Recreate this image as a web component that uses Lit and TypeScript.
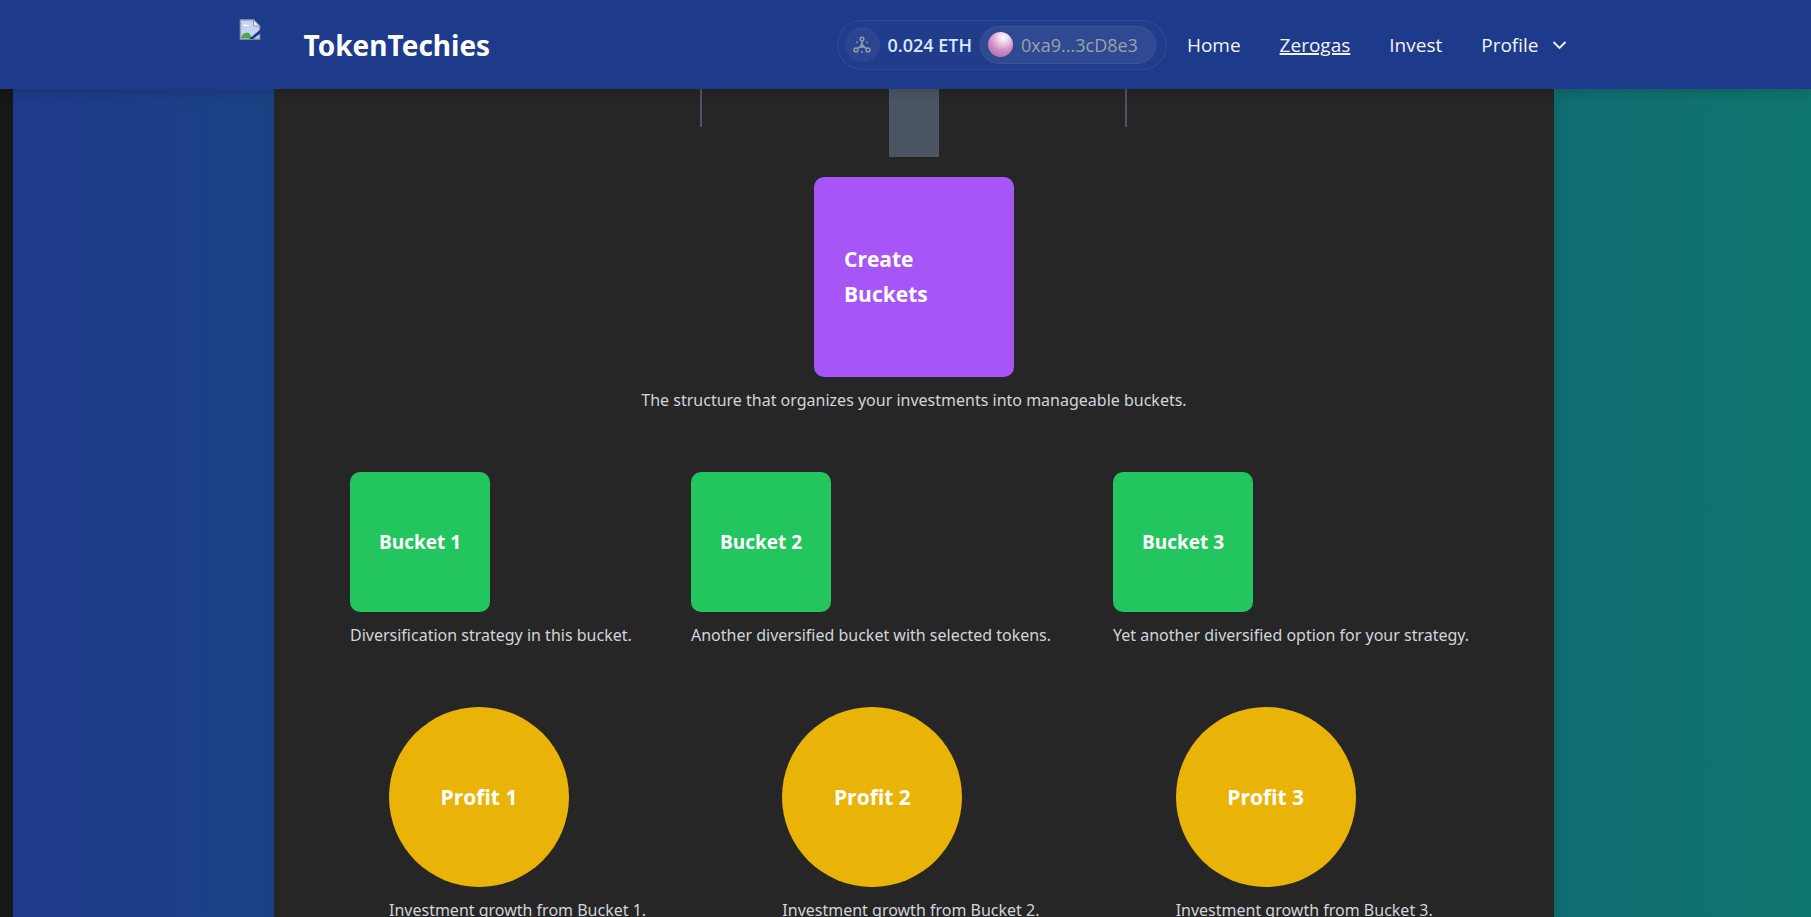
import { LitElement, html, css } from "lit";
import { customElement } from "lit/decorators.js";

const buckets = [
  { name: "Bucket 1", note: "Diversification strategy in this bucket." },
  { name: "Bucket 2", note: "Another diversified bucket with selected tokens." },
  { name: "Bucket 3", note: "Yet another diversified option for your strategy." },
];

const profits = [
  { name: "Profit 1", note: "Investment growth from Bucket 1." },
  { name: "Profit 2", note: "Investment growth from Bucket 2." },
  { name: "Profit 3", note: "Investment growth from Bucket 3." },
];

@customElement("site-header")
class SiteHeader extends LitElement {
  static styles = css`
    :host {
      display: block;
      position: relative;
      z-index: 1;
      background: #1e3a8a;
      box-shadow: 0 4px 12px rgba(0, 0, 0, 0.15);
      color: #f3f4f6;
    }
    .bar {
      box-sizing: border-box;
      max-width: 1334px;
      height: 89px;
      margin: 0 auto;
      padding-right: 6px;
      display: flex;
      align-items: center;
      justify-content: space-between;
    }
    .brand {
      display: flex;
      align-items: center;
      color: #fff;
      text-decoration: none;
      font-family: "Noto Sans", sans-serif;
      font-size: 28px;
      font-weight: 700;
    }
    .logo {
      width: 65px;
      height: 52px;
    }
    .logo svg {
      display: block;
    }
    .right {
      display: flex;
      align-items: center;
      gap: 20px;
    }
    .wallet {
      display: flex;
      align-items: center;
      gap: 8px;
      box-sizing: border-box;
      height: 50px;
      padding: 0 10px 0 7px;
      border: 1px solid rgba(255, 255, 255, 0.07);
      border-radius: 25px;
      background: rgba(255, 255, 255, 0.01);
      font-size: 18px;
    }
    .network {
      display: grid;
      place-items: center;
      width: 35px;
      height: 35px;
      padding: 0;
      border: 0;
      border-radius: 50%;
      background: rgba(255, 255, 255, 0.05);
    }
    .balance {
      color: #dbeafe;
      font-weight: 600;
    }
    .account {
      display: flex;
      align-items: center;
      gap: 8px;
      box-sizing: border-box;
      height: 38px;
      padding: 0 17px 0 7px;
      border: 1px solid rgba(255, 255, 255, 0.05);
      border-radius: 19px;
      background: rgba(255, 255, 255, 0.07);
      color: #99a3a8;
      font: inherit;
      font-weight: 500;
    }
    .ball {
      width: 25px;
      height: 25px;
      border-radius: 50%;
      background: radial-gradient(circle at 62% 22%, #fff 0, #f0d3ea 22%, #cf8fc4 52%, #b979b4 75%, #d5a6d3 100%);
    }
    nav {
      display: flex;
      align-items: center;
      gap: 39px;
      font-size: 19px;
      font-weight: 500;
    }
    nav a,
    .profile {
      color: inherit;
      text-decoration: none;
    }
    nav a.active {
      text-decoration: underline;
      text-decoration-thickness: 2px;
    }
    .profile {
      display: flex;
      align-items: center;
      gap: 13px;
      padding: 0;
      border: 0;
      background: none;
      font: inherit;
    }
  `;

  render() {
    return html`
      <div class="bar">
        <a class="brand" href="#">
          <span class="logo">
            <svg width="22" height="22" viewBox="0 0 22 22">
              <path d="M1.500 1h13l6 6v13h-19z" fill="#c3d5f4" stroke="#9aa3ad" stroke-width="1.500" />
              <path d="M4 7q1-3 3-1q3-1 3 1z" fill="#fff" />
              <path d="M2 19c1-5 5-6 8-5l3 5z" fill="#4fa83d" />
              <path d="M14.500 1v6h6z" fill="#eef2f7" stroke="#8c949c" />
              <path d="M22 10L10 20h4l8-6z" fill="#1e3a8a" />
            </svg>
          </span>
          <span>TokenTechies</span>
        </a>
        <div class="right">
          <div class="wallet">
            <button class="network" aria-label="Network">
              <svg width="18" height="18" viewBox="0 0 18 18" fill="none" stroke="#8f9dab" stroke-width="1.500">
                <circle cx="9" cy="3" r="1.800" />
                <circle cx="3" cy="14" r="1.900" />
                <circle cx="15" cy="14" r="1.900" />
                <path d="M9 5v3M7 11l-2.500 1.500M11 11l2.500 1.500" />
                <path d="M9 8l2 3H7z" />
                <path d="M4 5.500v1.500M14 5.500v1.500M9 15v2" />
              </svg>
            </button>
            <span class="balance">0.024 ETH</span>
            <button class="account"><span class="ball"></span>0xa9...3cD8e3</button>
          </div>
          <nav>
            <a href="#home">Home</a>
            <a href="#zerogas" class="active">Zerogas</a>
            <a href="#invest">Invest</a>
            <button class="profile">
              Profile
              <svg width="15" height="10" viewBox="0 0 15 10" fill="none" stroke="currentColor" stroke-width="1.800">
                <path d="M1.500 2l6 6l6-6" />
              </svg>
            </button>
          </nav>
        </div>
      </div>
    `;
  }
}

@customElement("app-root")
class AppRoot extends LitElement {
  static styles = css`
    :host {
      display: flex;
      flex-direction: column;
      height: 100vh;
      background: #171717;
      font-family: "Open Sans", "Noto Sans", sans-serif;
      color: #fff;
    }
    main {
      flex: 1;
      min-height: 0;
      margin-left: 13px;
      padding-left: 4px;
      overflow-y: auto;
      scrollbar-width: none;
      background: linear-gradient(to right, #1e3a8a, #0f766e);
    }
    .panel {
      box-sizing: border-box;
      max-width: 1280px;
      margin: 0 auto;
      padding: 0 50px 58px;
      background: #262626;
      box-shadow: 0 4px 15px rgba(0, 0, 0, 0.1);
      display: flex;
      flex-direction: column;
      gap: 58px;
    }
    .step {
      display: flex;
      flex-direction: column;
      align-items: center;
    }
    .links {
      align-self: stretch;
      display: grid;
      grid-template-columns: 1fr 50px 1fr;
      margin-bottom: 20px;
    }
    .line {
      width: 2px;
      height: 38px;
      background: #4b5563;
    }
    .line.left {
      justify-self: end;
      margin-right: 187px;
    }
    .line.right {
      margin-left: 186px;
    }
    .trunk {
      height: 68px;
      background: #4b5563;
    }
    .row {
      display: grid;
    }
    .buckets {
      grid-template-columns: 341fr 422fr 417fr;
    }
    .buckets > div {
      padding-left: 26px;
    }
    .profits {
      grid-template-columns: repeat(3, 1fr);
    }
    .profits > div {
      padding-left: 65px;
    }
    .box {
      box-sizing: border-box;
      display: flex;
      align-items: center;
      border-radius: 10px;
    }
    .root {
      width: 200px;
      height: 200px;
      padding: 30px;
      background: #a855f7;
    }
    .buckets .box {
      width: 140px;
      height: 140px;
      justify-content: center;
      background: #22c55e;
    }
    .profits .box {
      width: 180px;
      height: 180px;
      justify-content: center;
      border-radius: 50%;
      background: #eab308;
    }
    h3 {
      margin: 0;
      font-size: 21px;
      line-height: 35px;
      font-weight: 700;
    }
    .buckets h3 {
      font-size: 19px;
    }
    p {
      margin: 10px 0 0;
      font-family: "Noto Sans", sans-serif;
      font-size: 16px;
      line-height: 27px;
      color: #d1d5db;
    }
  `;

  render() {
    const row = (items: { name: string; note: string }[], kind: string) => html`
      <section class="row ${kind}">
        ${items.map(
          (item) => html`
            <div>
              <div class="box"><h3>${item.name}</h3></div>
              <p>${item.note}</p>
            </div>
          `
        )}
      </section>
    `;
    return html`
      <site-header></site-header>
      <main>
        <div class="panel">
          <section class="step">
            <div class="links">
              <div class="line left"></div>
              <div class="trunk"></div>
              <div class="line right"></div>
            </div>
            <div class="box root"><h3>Create Buckets</h3></div>
            <p>The structure that organizes your investments into manageable buckets.</p>
          </section>
          ${row(buckets, "buckets")} ${row(profits, "profits")}
        </div>
      </main>
    `;
  }
}
